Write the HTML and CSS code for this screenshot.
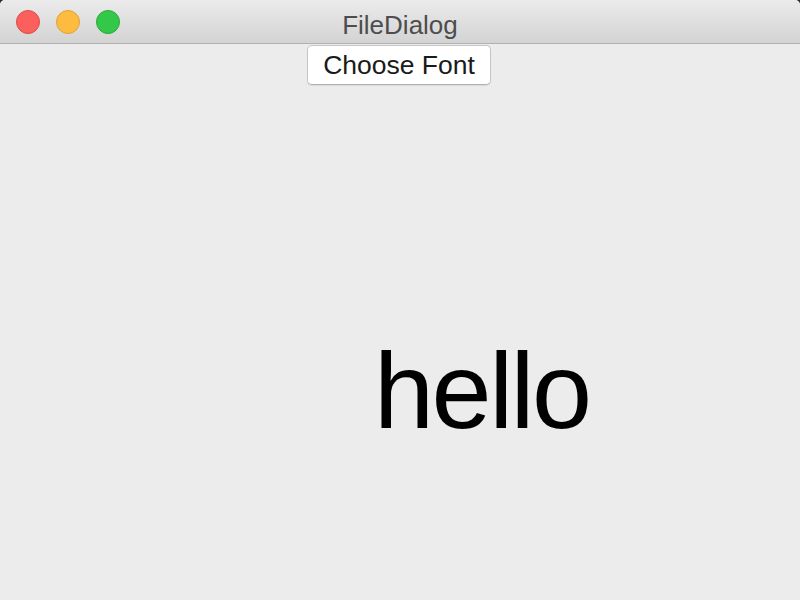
FILE: index.html
```html
<!DOCTYPE html>
<html>
<head>
<meta charset="utf-8">
<link rel="stylesheet" href="styles.css">
</head>
<body>
<div class="window">
  <div class="titlebar">
    <div class="lights">
      <span class="light red"></span>
      <span class="light yellow"></span>
      <span class="light green"></span>
    </div>
    <div class="title">FileDialog</div>
  </div>
  <div class="content">
    <div class="btnrow"><button class="btn">Choose Font</button></div>
    <div class="hello">hello</div>
  </div>
</div>
</body>
</html>
```
FILE: styles.css
```css
html, body {
  margin: 0;
  padding: 0;
  background: #2a2a2a;
}
.window {
  width: 800px;
  height: 600px;
  background: #ececec;
  border-radius: 5px 5px 0 0;
  overflow: hidden;
  font-family: "Liberation Sans", Arial, sans-serif;
}
.titlebar {
  height: 43px;
  border-bottom: 1px solid #b1b1b1;
  background: linear-gradient(#ebebeb, #d3d3d3);
  display: flex;
  justify-content: center;
  position: relative;
}
.lights {
  position: absolute;
  left: 16px;
  top: 10px;
  display: flex;
  gap: 16px;
}
.light {
  width: 24px;
  height: 24px;
  border-radius: 50%;
  box-sizing: border-box;
}
.red { background: #fc605c; border: 1px solid #de4a45; }
.yellow { background: #fdbc40; border: 1px solid #dea236; }
.green { background: #34c84a; border: 1px solid #27aa35; }
.title {
  font-size: 26px;
  line-height: 30px;
  padding-top: 10px;
  color: #4d4d4d;
}
.content {
  display: flex;
  flex-direction: column;
}
.btnrow {
  display: flex;
  padding-left: 307px;
  padding-top: 1px;
}
.btn {
  width: 184px;
  height: 40px;
  background: #fff;
  border: 1px solid #c6c6c6;
  border-bottom-color: #b0b0b0;
  border-radius: 5px;
  font-family: "Liberation Sans", Arial, sans-serif;
  font-size: 26.5px;
  color: #1a1a1a;
  padding: 0;
  box-shadow: 0 1px 1px rgba(0,0,0,0.08);
}
.hello {
  font-size: 108px;
  line-height: 108px;
  letter-spacing: -2.5px;
  color: #000;
  padding-left: 374px;
  margin-top: 252px;
}
```
